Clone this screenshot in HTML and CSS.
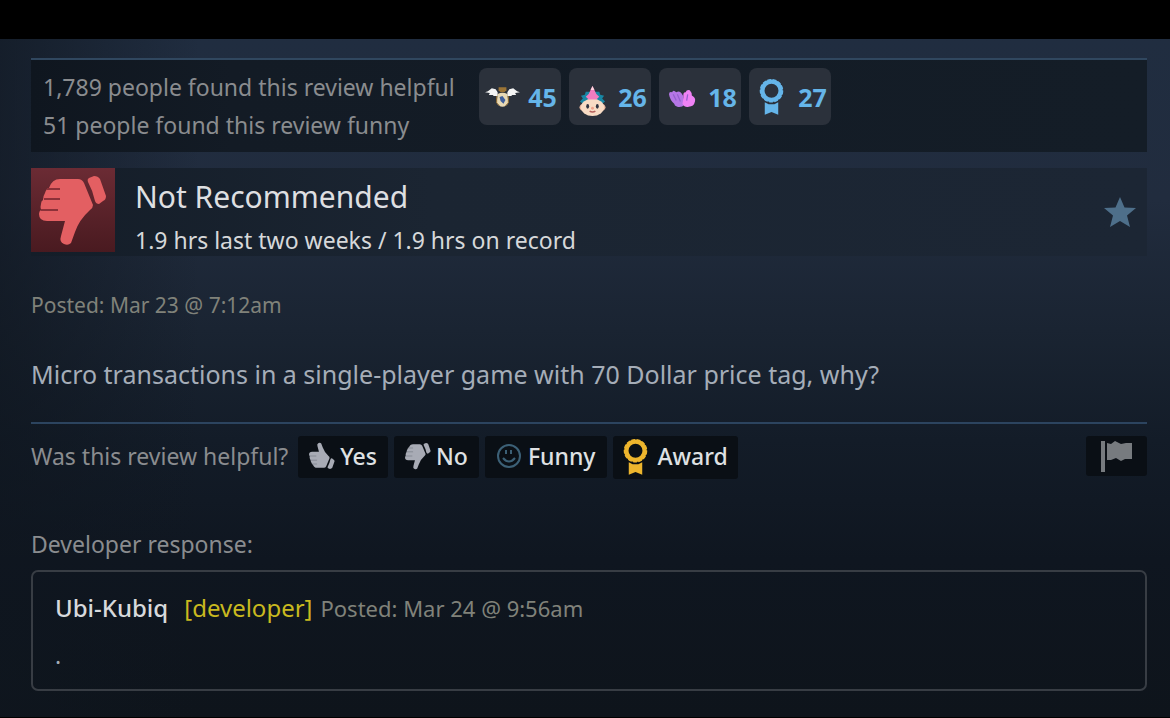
FILE: index.html
```html
<!DOCTYPE html>
<html lang="en">
<head>
<meta charset="utf-8">
<title>Review</title>
<link rel="stylesheet" href="styles.css">
</head>
<body>
<svg class="defs" aria-hidden="true">
  <symbol id="thumb" viewBox="0 0 84 84">
    <path d="M29 11H47Q51 11 53 15L62 37Q62 40 59 42Q48 52 44 64L40 75Q37 78 33 76Q28 74 30 68L34 53H16Q8 53 8 46Q8 43 10 42Q9 39 10 36Q10 33 12 32Q12 28 14 25Q15 21 18 20Q21 11 29 11Z"/>
    <path d="M58 10L63 8Q67 8 69 11L75 28Q75 32 72 33L68 36Q65 36 64 33Q62 23 57 14Q56 11 58 10Z"/>
    <path class="crease" d="M16 21H29M13 31H29M10 42H27"/>
  </symbol>
  <symbol id="ribbon" viewBox="0 0 26 38">
    <circle cx="13" cy="13" r="9.500" fill="none" stroke="currentColor" stroke-width="4.500"/>
    <circle cx="13" cy="13" r="11.500" fill="none" stroke="currentColor" stroke-width="1.500" stroke-dasharray="4 1.500"/>
    <path fill="currentColor" d="M6 25L10 27H16L20 25V38L13 35L6 38Z"/>
  </symbol>
</svg>
<div class="topbar"></div>
<main class="page">
  <section class="votes">
    <p class="counts">1,789 people found this review helpful<br>51 people found this review funny</p>
    <div class="awards">
      <button class="award">
        <svg class="award-icon wide" viewBox="0 0 36 22" aria-hidden="true">
          <path fill="#f4f4f4" d="M0 6L3 5L7 2L11 3L13 6V10H9L8 9H4L5 7ZM36 6L33 5L29 2L25 3L23 6V10H27L28 9H32L31 7Z"/>
          <path fill="#e8d9b5" d="M13 8Q18 5 23 8L24 17Q22 21 18 21Q14 21 12 17Z"/>
          <path fill="#9b7436" d="M14 1H22V4L20 6H16L14 4Z"/>
          <path fill="#3f5f9c" d="M15 11L18 10L21 14L19 18L16 15Z"/>
          <path fill="none" stroke="#9b7436" d="M12 10V17L15 20M24 10V17L21 20"/>
        </svg><span>45</span></button>
      <button class="award">
        <svg class="award-icon face" viewBox="0 0 28 31" aria-hidden="true">
          <path fill="#1787a5" d="M1 16L4 13L2 10L6 9L7 6L21 6L22 9L26 10L24 13L27 16L22 20H6Z"/>
          <ellipse cx="14" cy="22" rx="13.500" ry="6" fill="#e9b79f"/>
          <ellipse cx="14" cy="22" rx="12" ry="9" fill="#f8dcc5"/>
          <path fill="#f07cc0" d="M7 11Q11 8 12 4L14 0L16 4Q17 8 21 11L18 14H10Z"/>
          <path fill="#ffd5dd" d="M12 4L14 0L16 4Z"/>
          <ellipse cx="9" cy="21" rx="1.500" ry="2.500" fill="#303542"/><ellipse cx="19" cy="21" rx="1.500" ry="2.500" fill="#303542"/>
          <path fill="none" stroke="#b65f5b" stroke-width="1.500" d="M11 26Q14 28 17 26"/>
          <circle cx="14" cy="23" r="1.500" fill="#efa28b"/>
        </svg><span>26</span></button>
      <button class="award">
        <svg class="award-icon paws" viewBox="0 0 26 18" aria-hidden="true">
          <path fill="#b576e6" d="M0 5Q0 2 3 3Q4 0 7 3Q10 1 12 4L14 7L15 15Q12 18 8 17Q5 16 5 14Q1 11 0 5Z"/>
          <path fill="#ef82f5" d="M14 8Q13 3 16 3Q17 0 20 1Q22 3 22 6Q26 8 25 12Q24 17 19 17Q15 18 13 14Z"/>
          <path fill="none" stroke="#9560cf" stroke-width="1.200" d="M4 5L7 11M8 5L11 12M18 5L17 11"/>
        </svg><span>18</span></button>
      <button class="award"><svg class="award-icon medal" aria-hidden="true"><use href="#ribbon"/></svg><span>27</span></button>
    </div>
  </section>

  <section class="verdict">
    <svg class="verdict-icon" viewBox="0 0 84 84" aria-hidden="true"><use href="#thumb"/></svg>
    <div class="verdict-text">
      <h1>Not Recommended</h1>
      <p>1.9 hrs last two weeks / 1.9 hrs on record</p>
    </div>
    <svg class="star" viewBox="0 0 32 30" aria-hidden="true"><path d="M16 0L20.500 10.500L32 11L23 18.500L26 30L16 24L6 30L9 18.500L0 11L11.500 10.500Z"/></svg>
  </section>

  <p class="posted">Posted: Mar 23 @ 7:12am</p>
  <p class="review">Micro transactions in a single-player game with 70 Dollar price tag, why?</p>

  <section class="actions">
    <span class="question">Was this review helpful?</span>
    <button class="action vote"><svg class="hand up" viewBox="0 0 84 84" aria-hidden="true"><use href="#thumb"/></svg><span>Yes</span></button>
    <button class="action vote"><svg class="hand" viewBox="0 0 84 84" aria-hidden="true"><use href="#thumb"/></svg><span>No</span></button>
    <button class="action"><svg class="smile" viewBox="0 0 24 24" aria-hidden="true"><circle cx="12" cy="12" r="11"/><path d="M9 6V10M14 6V10M6 14Q12 21 18 14"/></svg><span>Funny</span></button>
    <button class="action give"><svg class="medal" aria-hidden="true"><use href="#ribbon"/></svg><span>Award</span></button>
    <button class="action flag" aria-label="Report"><svg viewBox="0 0 31 31" aria-hidden="true"><path d="M0 0H4V31H0ZM6 2L10 3L14 0L20 3L25 2H31V18L24 18L20 20L15 17L10 19L6 19Z"/></svg></button>
  </section>

  <h2 class="response-title">Developer response:</h2>
  <article class="response">
    <p class="byline"><a href="#">Ubi-Kubiq</a><span class="role">[developer]</span><span class="date">Posted: Mar 24 @ 9:56am</span></p>
    <p class="reply">.</p>
  </article>
</main>
</body>
</html>
```
FILE: styles.css
```css
* { box-sizing: border-box; }
body {
  margin: 0;
  min-height: 100vh;
  font-family: "Noto Sans", sans-serif;
  color: #8a8c8f;
  background:
    linear-gradient(90deg, rgba(15, 22, 31, .65), transparent 200px),
    linear-gradient(180deg, #202d40 39px, #212c3e 200px, #1a2432 330px, #131c28 440px, #0f1620 560px, #0e141b 100%);
  border-bottom: 1px solid #000;
}
h1, h2, p { margin: 0; font-weight: 400; }
button { border: 0; margin: 0; font: inherit; cursor: pointer; }
svg { flex: none; fill: currentColor; }
.defs { position: absolute; width: 0; height: 0; }
.topbar { height: 39px; background: #000; }
.page { padding: 19px 23px 24px 31px; }

.votes {
  display: flex;
  gap: 24px;
  height: 94px;
  padding: 8px 12px;
  border-top: 2px solid #30475f;
  background: linear-gradient(90deg, #0f161f, #131b25 200px, #141d27);
}
.counts { font-size: 23px; line-height: 38px; white-space: nowrap; }
.awards { display: flex; gap: 8px; }
.award {
  display: flex;
  align-items: center;
  justify-content: space-between;
  width: 82px;
  height: 57px;
  padding: 0 4px 0 6px;
  border-radius: 8px;
  background: #2b313b;
  color: #65b5e9;
  font-size: 25px;
  font-weight: 700;
}
.wide { width: 35px; height: 22px; }
.face { width: 27px; height: 30px; margin: 8px 0 0 4px; }
.paws { width: 27px; height: 19px; margin: 4px 0 0 4px; }
.award-icon.medal { width: 25px; height: 37px; margin-left: 4px; }

.verdict {
  display: flex;
  align-items: flex-start;
  gap: 20px;
  height: 88px;
  margin-top: 16px;
  background: linear-gradient(90deg, #141d28, #1b2532 400px, #1c2634);
}
.verdict-icon {
  width: 84px;
  height: 84px;
  color: #e35f62;
  background: linear-gradient(#6b2b34, #491a20);
  --crease: #8c3139;
}
.crease { fill: none; stroke: var(--crease); stroke-width: 2; }
.verdict-text { flex: 1; }
h1 { font-size: 30px; line-height: 58px; color: #dedfe1; }
.verdict-text p { font-size: 23px; line-height: 28px; color: #d6d8da; }
.star { width: 32px; height: 30px; margin: 29px 11px 0 0; color: #4e6f8a; }

.posted { margin-top: 34px; font-size: 21px; line-height: 30px; color: #80827a; }
.review { margin-top: 36px; padding-bottom: 30px; border-bottom: 2px solid #2c445f; font-size: 25px; line-height: 36px; color: #a5adb8; }

.actions { display: flex; gap: 6px; margin-top: 12px; align-items: flex-start; }
.question { margin-right: 4px; font-size: 23px; line-height: 40px; white-space: nowrap; }
.action {
  display: flex;
  align-items: center;
  gap: 7px;
  height: 42px;
  padding: 0 12px 3px;
  border-radius: 3px;
  background: #0a0f15;
  color: #dfe1e3;
  font-size: 23px;
  font-weight: 500;
}
.vote { gap: 2px; padding-left: 8px; padding-right: 11px; }
.hand { width: 32px; height: 32px; color: #a8abb5; --crease: #7d818b; }
.up { transform: scaleY(-1); }
.smile { width: 24px; height: 24px; fill: none; stroke: #3c6076; stroke-width: 2; }
.give { height: 43px; gap: 9px; padding-left: 10px; padding-right: 10px; }
.give .medal { width: 25px; height: 37px; color: #edb52d; }
.flag { height: 40px; margin-left: auto; padding: 0 15px; color: #777b7f; }
.flag svg { width: 31px; height: 31px; }

.response-title { margin-top: 47px; font-size: 23px; line-height: 36px; }
.response { margin-top: 8px; min-height: 121px; padding: 18px 22px 12px; border: 2px solid #383d44; border-radius: 7px; }
.byline { display: flex; align-items: baseline; font-size: 24px; line-height: 36px; }
.byline a { color: #d7d9dc; text-decoration: none; font-weight: 500; }
.role { margin: 0 8px 0 16px; color: #c9b91f; }
.date { font-size: 22px; color: #80827a; }
.reply { margin-top: 14px; font-size: 23px; line-height: 30px; color: #a5adb8; }
```
